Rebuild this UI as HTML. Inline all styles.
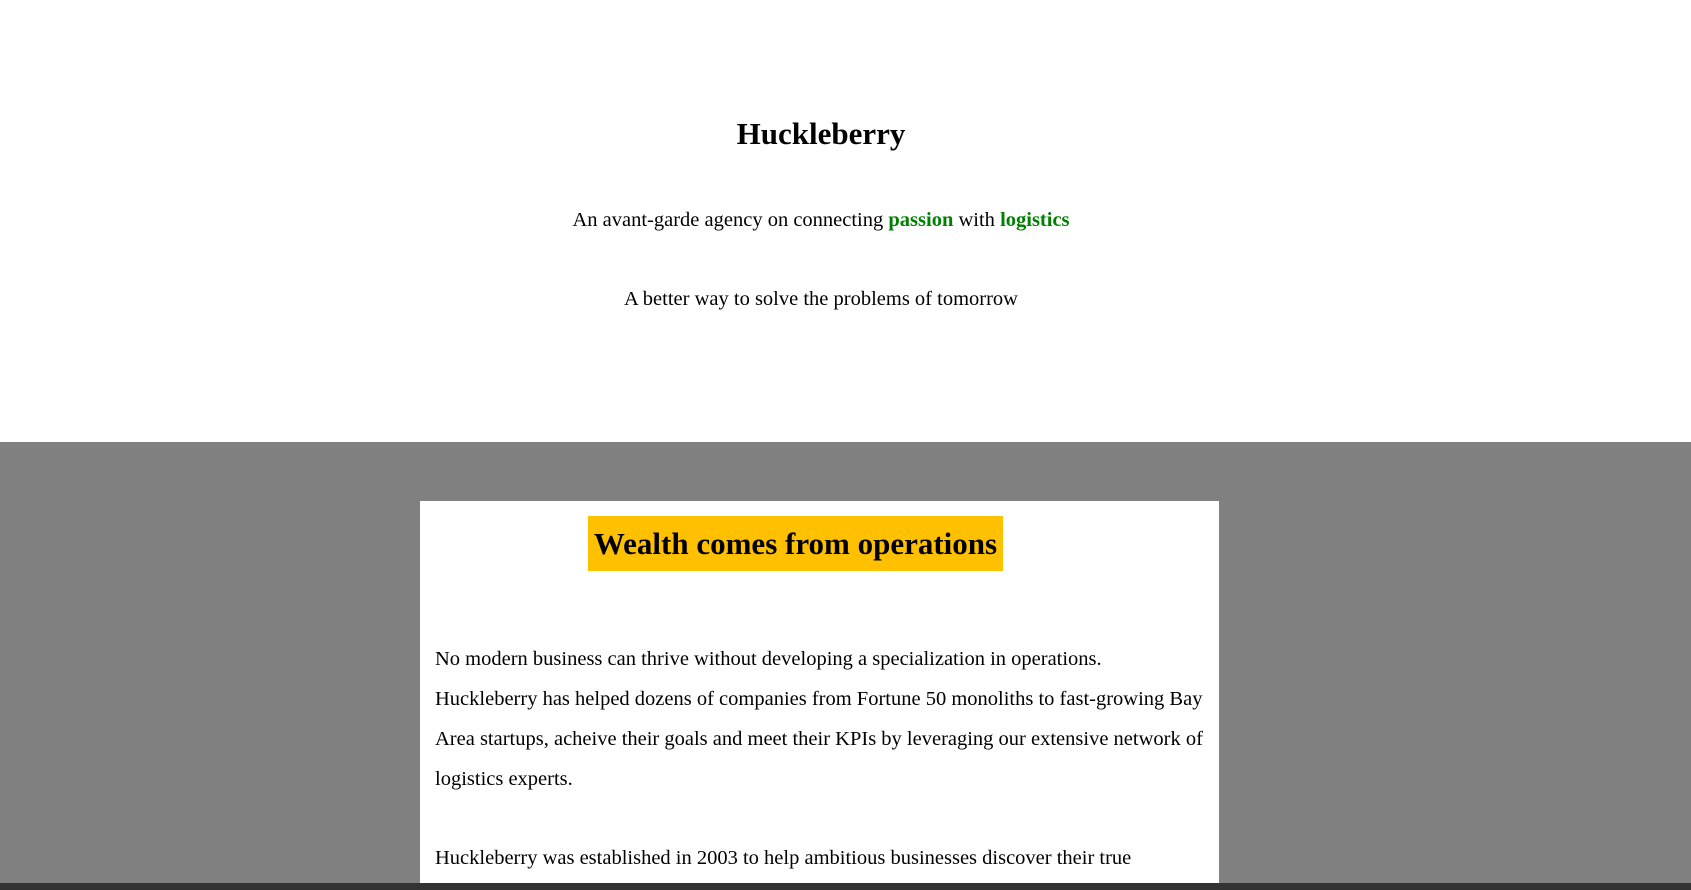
<!DOCTYPE html>
<html><head><meta charset="utf-8"><style>
html,body{margin:0;padding:0;width:1691px;height:890px;overflow:hidden;background:#fff;font-family:"Liberation Serif",serif;color:#000}
.a{position:absolute;white-space:nowrap}
.c{left:0;width:1642px;text-align:center}
#gray{position:absolute;left:0;top:442px;width:1691px;height:441px;background:#808080}
#bar{position:absolute;left:0;top:883px;width:1691px;height:7px;background:#333}
#box{position:absolute;left:420px;top:501px;width:799px;height:382px;background:#fff}
#yel{position:absolute;left:168px;top:15px;width:415px;height:55px;background:#ffc000;font-weight:bold;font-size:31px;line-height:55px;text-align:center;white-space:nowrap}
.p{position:absolute;left:15px;font-size:20.5px;line-height:40px;white-space:nowrap}
g{color:#008000;font-weight:bold}
</style></head><body>
<div class="a c" style="top:114px;font-size:31px;font-weight:bold;line-height:40px">Huckleberry</div>
<div class="a c" style="top:206px;font-size:20.5px;line-height:28px">An avant-garde agency on connecting <g>passion</g> with <g>logistics</g></div>
<div class="a c" style="top:285px;font-size:20.5px;line-height:28px">A better way to solve the problems of tomorrow</div>
<div id="gray"></div>
<div id="box">
<div id="yel">Wealth comes from operations</div>
<div class="p" style="top:138px">No modern business can thrive without developing a specialization in operations.<br>Huckleberry has helped dozens of companies from Fortune 50 monoliths to fast-growing Bay<br>Area startups, acheive their goals and meet their KPIs by leveraging our extensive network of<br>logistics experts.</div>
<div class="p" style="top:337px">Huckleberry was established in 2003 to help ambitious businesses discover their true</div>
</div>
<div id="bar"></div>
</body></html>
